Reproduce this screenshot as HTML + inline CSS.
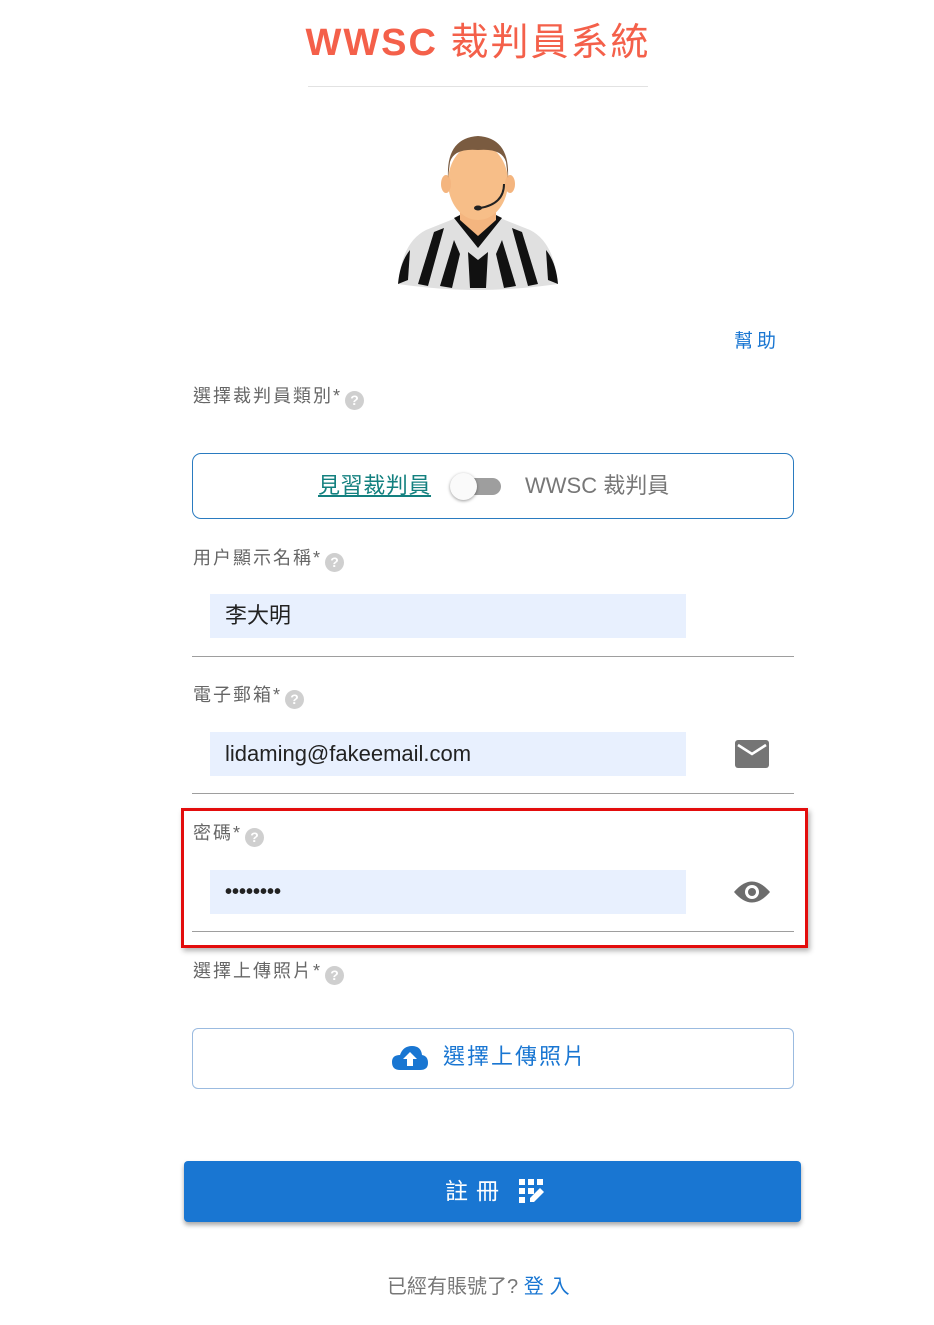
<!DOCTYPE html>
<html><head><meta charset="utf-8"><style>
*{margin:0;padding:0;box-sizing:border-box}
body{width:934px;height:1325px;background:#fff;position:relative;font-family:"Liberation Sans","Noto Sans CJK TC",sans-serif;overflow:hidden}
.a{position:absolute;white-space:nowrap}
.lbl{font-size:18px;color:#666;line-height:24px;letter-spacing:2px}
.q{display:inline-block;width:19px;height:19px;border-radius:50%;background:#cfcfcf;color:#fff;font-size:14px;text-align:center;line-height:19px;font-weight:bold;vertical-align:-3px;margin-left:3px;letter-spacing:0}
.inp{background:#e8f0fe;height:44px;left:210px;width:476px;font-size:22px;color:#222;padding-left:15px;line-height:44px}
.ul{height:1px;background:#9e9e9e;left:192px;width:602px}
</style></head><body>
<div class="a" style="left:300px;top:20px;width:356px;text-align:center;font-size:38px;color:#f4604a;line-height:46px;letter-spacing:2px"><b style="font-family:'Liberation Sans',sans-serif">WWSC</b> 裁判員系統</div>
<div class="a" style="left:308px;top:86px;width:340px;height:1px;background:#e2e2e2"></div>

<svg class="a" style="left:396px;top:132px" width="164" height="158" viewBox="0 0 164 158">
<path d="M2 152 Q6 110 30 98 L60 86 L104 86 L134 98 Q158 110 162 152 Q120 158 82 158 Q44 158 2 152Z" fill="#e0e0e0"/>
<g fill="#111">
<path d="M22 152 L38 100 L48 96 L32 154Z"/><path d="M44 154 L58 108 L64 122 L56 156Z"/>
<path d="M74 156 L72 120 L82 128 L92 120 L90 156Z"/><path d="M108 156 L100 122 L106 108 L120 154Z"/>
<path d="M132 154 L116 96 L126 100 L142 152Z"/>
<path d="M2 152 Q4 130 14 118 L12 148Z"/><path d="M162 152 Q160 130 150 118 L152 148Z"/>
<path d="M58 86 L82 116 L106 86 L98 82 L82 100 L66 82Z"/>
</g>
<path d="M64 60 L64 88 L82 104 L100 88 L100 60Z" fill="#f4b57f"/>
<ellipse cx="82" cy="50" rx="30" ry="38" fill="#f7be88"/>
<ellipse cx="50" cy="52" rx="5" ry="9" fill="#f4b57f"/><ellipse cx="114" cy="52" rx="5" ry="9" fill="#f4b57f"/>
<path d="M52 46 Q50 6 82 4 Q114 6 112 46 L110 30 Q106 16 82 18 Q58 16 54 30Z" fill="#7a5b40"/>
<path d="M108 52 Q108 72 84 76" stroke="#222" stroke-width="2" fill="none"/><ellipse cx="82" cy="76" rx="4" ry="2.5" fill="#222"/>
</svg>

<div class="a" style="left:734px;top:326px;font-size:19px;color:#1976d2;letter-spacing:4px">幫助</div>

<div class="a lbl" style="left:193px;top:384px">選擇裁判員類別*<span class="q">?</span></div>
<div class="a" style="left:192px;top:453px;width:602px;height:66px;border:1px solid #2a7bc0;border-radius:9px"></div>
<div class="a" style="left:318px;top:470px;font-size:22px;color:#13807f;text-decoration:underline;line-height:32px;letter-spacing:0.6px">見習裁判員</div>
<div class="a" style="left:458px;top:478px;width:43px;height:17px;border-radius:9px;background:#9e9e9e"></div>
<div class="a" style="left:450px;top:473px;width:27px;height:27px;border-radius:50%;background:#fafafa;box-shadow:0 1px 3px rgba(0,0,0,.4)"></div>
<div class="a" style="left:525px;top:470px;font-size:22px;color:#777;line-height:32px">WWSC 裁判員</div>

<div class="a lbl" style="left:193px;top:546px">用户顯示名稱*<span class="q">?</span></div>
<div class="a inp" style="top:594px">李大明</div>
<div class="a ul" style="top:656px"></div>

<div class="a lbl" style="left:193px;top:683px">電子郵箱*<span class="q">?</span></div>
<div class="a inp" style="top:732px">lidaming@fakeemail.com</div>
<svg class="a" style="left:734px;top:739px" width="36" height="30" viewBox="0 0 36 30"><rect x="1" y="1" width="34" height="28" rx="3" fill="#757575"/><path d="M4 6 L18 15 L32 6" stroke="#fff" stroke-width="2.6" fill="none"/></svg>
<div class="a ul" style="top:793px"></div>

<div class="a" style="left:181px;top:808px;width:627px;height:140px;border:3px solid #e30d0d;box-shadow:2px 3px 5px rgba(0,0,0,.3)"></div>
<div class="a lbl" style="left:193px;top:821px">密碼*<span class="q">?</span></div>
<div class="a inp" style="top:870px;font-size:20px;font-weight:bold;letter-spacing:0px">••••••••</div>
<svg class="a" style="left:733px;top:879px" width="38" height="26" viewBox="0 0 38 26"><path d="M1 13 Q19 -8 37 13 Q19 34 1 13Z" fill="#6d6d6d"/><circle cx="19" cy="13" r="7" fill="#fff"/><circle cx="19" cy="13" r="4" fill="#6d6d6d"/></svg>
<div class="a ul" style="top:931px"></div>

<div class="a lbl" style="left:193px;top:959px">選擇上傳照片*<span class="q">?</span></div>
<div class="a" style="left:192px;top:1028px;width:602px;height:61px;border:1px solid #9bbbe0;border-radius:6px"></div>
<svg class="a" style="left:391px;top:1045px" width="38" height="26" viewBox="0 0 38 26"><path d="M9 25 Q1 25 1 17 Q1 10 9 10 Q12 1 21 1 Q30 1 31 10 Q37 11 37 18 Q37 25 29 25Z" fill="#1976d2"/><path d="M19 7 L12 14 L16 14 L16 21 L22 21 L22 14 L26 14Z" fill="#fff"/></svg>
<div class="a" style="left:443px;top:1041px;font-size:22px;color:#1976d2;line-height:32px;letter-spacing:2px">選擇上傳照片</div>

<div class="a" style="left:184px;top:1161px;width:617px;height:61px;background:#1976d2;border-radius:4px;box-shadow:0 3px 5px rgba(0,0,0,.35)"></div>
<div class="a" style="left:445px;top:1175px;font-size:23px;color:#fff;letter-spacing:8px;line-height:32px">註冊</div>
<svg class="a" style="left:518px;top:1178px" width="27" height="27" viewBox="0 0 27 27" fill="#fff"><rect x="1" y="1" width="6" height="6"/><rect x="10" y="1" width="6" height="6"/><rect x="19" y="1" width="6" height="6"/><rect x="1" y="10" width="6" height="6"/><rect x="10" y="10" width="6" height="6"/><rect x="1" y="19" width="6" height="6"/><path d="M12 24 L12 20 L22 10 L26 14 L16 24Z"/></svg>

<div class="a" style="left:387px;top:1273px;font-size:20px;color:#777;line-height:28px">已經有賬號了? <span style="color:#1976d2;letter-spacing:6px">登入</span></div>
</body></html>
